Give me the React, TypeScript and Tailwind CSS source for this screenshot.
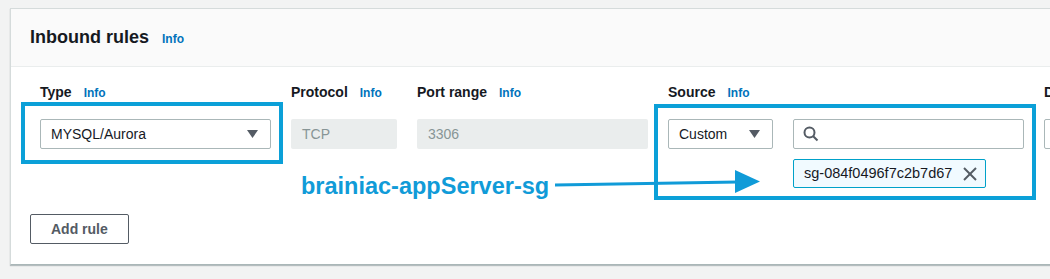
import React from 'react'

const font = { fontFamily: '"Liberation Sans", Arial, sans-serif' }

function Info({ className = '' }: { className?: string }) {
  return <span className={`text-[12px] font-bold text-[#0073bb] ${className}`}>Info</span>
}

function Label({ text, info = true }: { text: string; info?: boolean }) {
  return (
    <div className="h-[20px] flex items-baseline gap-[12px] whitespace-nowrap">
      <span className="text-[14px] font-bold text-[#16191f] leading-[20px]">{text}</span>
      {info && <Info />}
    </div>
  )
}

function Caret() {
  return (
    <svg width="11" height="8" viewBox="0 0 11 8">
      <polygon points="0,0 11,0 5.5,8" fill="#545b64" />
    </svg>
  )
}

function Select({ value, width }: { value: string; width: string }) {
  return (
    <div
      className={`${width} h-[30px] bg-white border border-[#aab7b8] rounded-[2px] flex items-center justify-between pl-[10px] pr-[12px] text-[14px] text-[#16191f]`}
    >
      <span>{value}</span>
      <Caret />
    </div>
  )
}

function Disabled({ value, width }: { value: string; width: string }) {
  return (
    <div
      className={`${width} h-[30px] bg-[#eaeded] rounded-[2px] flex items-center pl-[11px] text-[14px] text-[#879596]`}
    >
      {value}
    </div>
  )
}

export default function App() {
  return (
    <div
      className="relative w-[1050px] h-[279px] overflow-hidden bg-[#f2f3f3] pt-[8px] pl-[10px]"
      style={font}
    >
      <div className="w-[1120px] h-[257px] bg-white border border-[#d5dbdb] border-b-[#aab7b8] shadow-[0_1px_1px_rgba(0,28,36,0.25)]">
        {/* header */}
        <div className="h-[58px] bg-[#fafafa] border-b border-[#eaeded] flex items-center pl-[19px] gap-[13px]">
          <span className="text-[18px] font-bold text-[#16191f]">Inbound rules</span>
          <Info className="mt-[3px]" />
        </div>

        {/* body */}
        <div className="pl-[19px] pt-[15px] pb-[20px]">
          <div className="flex gap-[20px] pl-[10px]">
            <div className="relative flex flex-col gap-[17px]">
              <Label text="Type" />
              <Select value="MYSQL/Aurora" width="w-[231px]" />
              <div className="absolute left-[-19px] top-[20px] w-[262px] h-[62px] border-[4px] border-[#0ba0d8]" />
            </div>
            <div className="flex flex-col gap-[17px]">
              <Label text="Protocol" />
              <Disabled value="TCP" width="w-[106px]" />
            </div>
            <div className="flex flex-col gap-[17px]">
              <Label text="Port range" />
              <Disabled value="3306" width="w-[231px]" />
            </div>
            <div className="relative flex flex-col gap-[17px]">
              <Label text="Source" />
              <div className="flex gap-[20px]">
                <Select value="Custom" width="w-[105px]" />
                <div className="flex flex-col gap-[10px]">
                  <div className="w-[231px] h-[30px] bg-white border border-[#aab7b8] rounded-[2px] flex items-center pl-[9px]">
                    <svg width="16" height="16" viewBox="0 0 16 16" fill="none" stroke="#545b64" strokeWidth="2">
                      <circle cx="6.5" cy="6.5" r="5" />
                      <line x1="10.2" y1="10.2" x2="14.5" y2="14.5" />
                    </svg>
                  </div>
                  <div className="w-[193px] h-[29px] bg-[#f1faff] border border-[#00a1c9] rounded-[2px] flex items-center justify-between pl-[10px] pr-[8px] text-[14.5px] text-[#16191f]">
                    <span>sg-084f0496f7c2b7d67</span>
                    <svg width="14" height="14" viewBox="0 0 14 14" stroke="#545b64" strokeWidth="2">
                      <line x1="1" y1="1" x2="13" y2="13" />
                      <line x1="13" y1="1" x2="1" y2="13" />
                    </svg>
                  </div>
                </div>
              </div>
              <div className="absolute left-[-14px] top-[22px] w-[382px] h-[96px] border-[4px] border-[#0ba0d8]" />
            </div>
            <div className="flex flex-col gap-[17px]">
              <Label text="Description - optional" info={false} />
              <div className="w-[231px] h-[30px] bg-white border border-[#aab7b8] rounded-[2px]" />
            </div>
          </div>

          <button className="mt-[26px] h-[30px] px-[20px] border border-[#545b64] rounded-[2px] bg-white text-[14px] font-bold text-[#545b64]">
            Add rule
          </button>
        </div>
      </div>

      {/* annotation */}
      <span className="absolute left-[301px] top-[175px] text-[23.5px] leading-[22px] font-bold text-[#109bd8] whitespace-nowrap">
        brainiac-appServer-sg
      </span>
      <svg className="absolute left-[550px] top-[165px]" width="215" height="35" viewBox="0 0 215 35">
        <line x1="5" y1="20" x2="188" y2="17" stroke="#109bd8" strokeWidth="3" />
        <polygon points="185,5 210,16.5 185,28" fill="#109bd8" />
      </svg>
    </div>
  )
}
